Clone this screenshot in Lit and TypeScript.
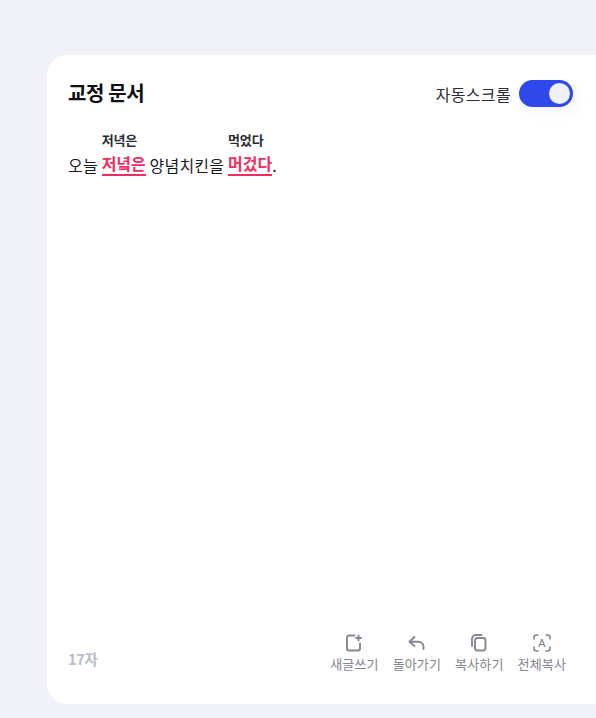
import { LitElement, html, css } from "lit";
import { customElement } from "lit/decorators.js";

@customElement("app-root")
export class AppRoot extends LitElement {
  static styles = css`
    :host {
      display: block;
      width: 596px;
      height: 718px;
      overflow: hidden;
      background: #f1f2f8;
      font-family: "Noto Sans CJK KR", "Noto Sans", sans-serif;
      padding: 55px 0 14px 47px;
      box-sizing: border-box;
    }
    .card {
      height: 649px;
      background: #fff;
      border-radius: 20px 0 0 20px;
      padding: 0 23px 0 21px;
      box-sizing: border-box;
      display: flex;
      flex-direction: column;
    }
    .head {
      display: flex;
      justify-content: space-between;
      align-items: center;
      height: 27px;
      margin-top: 25px;
    }
    .title { font-size: 20px; font-weight: 700; color: #111; letter-spacing: -0.4px; line-height: 25px; margin-top: -2px; }
    .auto { display: flex; align-items: center; gap: 8px; font-size: 16px; color: #2c2d35; letter-spacing: 0.35px; }
    .toggle {
      width: 54px; height: 27px; border-radius: 14px; background: #2f48ee;
      display: flex; align-items: center; justify-content: flex-end; padding-right: 3px; box-sizing: border-box;
      box-shadow: 6px 6px 14px rgba(80, 90, 160, 0.06);
    }
    .knob { width: 21px; height: 21px; border-radius: 50%; background: #eff0f8; }
    .doc { margin-top: 25px; display: flex; font-size: 16px; line-height: 24px; color: #1a1a1f; letter-spacing: 0.2px; align-items: flex-end; white-space: pre; }
    .fix { display: flex; flex-direction: column; align-items: flex-start; }
    .sug { font-size: 13px; line-height: 16px; font-weight: 700; color: #2a2b33; letter-spacing: -0.1px; margin-bottom: 4px; }
    .err { color: #ef2d5e; font-weight: 700; border-bottom: 2px solid #ef2d5e; line-height: 22px; height: 22px; letter-spacing: 0; }
    .plain { line-height: 24px; height: 24px; margin-bottom: -1px; }
    .foot { margin-top: auto; margin-bottom: 31px; display: flex; justify-content: space-between; align-items: flex-end; }
    .count { font-size: 14.5px; font-weight: 700; color: #b9bbc8; letter-spacing: -0.3px; line-height: 20px; margin-bottom: 4px; }
    .acts { display: flex; gap: 14px; margin-right: 7px; }
    .act { display: flex; flex-direction: column; align-items: center; gap: 2px; font-size: 13px; color: #83858f; letter-spacing: 0.15px; line-height: 18px; }
    svg { display: block; width: 20px; height: 20px; fill: none; stroke: #85868f; stroke-width: 1.9; stroke-linecap: round; stroke-linejoin: round; }
    .ltr { font-family: "Noto Sans", sans-serif; font-size: 11px; fill: #85868f; stroke: none; font-weight: 500; }
  `;

  render() {
    return html`
      <div class="card">
        <div class="head">
          <div class="title">교정 문서</div>
          <div class="auto">자동스크롤<div class="toggle"><div class="knob"></div></div></div>
        </div>
        <div class="doc">
          <span class="plain">오늘 </span>
          <span class="fix"><span class="sug">저녁은</span><span class="err">저녘은</span></span>
          <span class="plain"> 양념치킨을 </span>
          <span class="fix"><span class="sug">먹었다</span><span class="err">머겄다</span></span>
          <span class="plain">.</span>
        </div>
        <div class="foot">
          <div class="count">17자</div>
          <div class="acts">
            <div class="act">
              <svg viewBox="0 0 20 20"><path d="M10.500 2.500H5A2 2 0 0 0 3 4.500v11A2 2 0 0 0 5 17.500h9a2 2 0 0 0 2-2V10.500"/><path d="M14.500 2.500v5M12 5h5" /></svg>
              새글쓰기
            </div>
            <div class="act">
              <svg viewBox="0 0 20 20"><path d="M7.500 4 2.500 8.800 7.500 13"/><path d="M3 8.800h8.500a5 5 0 0 1 5 5v2.200"/></svg>
              돌아가기
            </div>
            <div class="act">
              <svg viewBox="0 0 20 20"><rect x="6" y="5" width="10.500" height="12.500" rx="2.500"/><path d="M3 13V6a4 4 0 0 1 4-4h5.500"/></svg>
              복사하기
            </div>
            <div class="act">
              <svg viewBox="0 0 20 20" style="stroke-width:1.6"><path d="M2 6V4.500a2.500 2.500 0 0 1 2.500-2.500H6M14 2h1.500a2.500 2.500 0 0 1 2.500 2.500V6M18 14v1.500a2.500 2.500 0 0 1-2.500 2.500H14M6 18H4.500a2.500 2.500 0 0 1-2.500-2.500V14"/><text class="ltr" x="10" y="14" text-anchor="middle">A</text></svg>
              전체복사
            </div>
          </div>
        </div>
      </div>
    `;
  }
}
